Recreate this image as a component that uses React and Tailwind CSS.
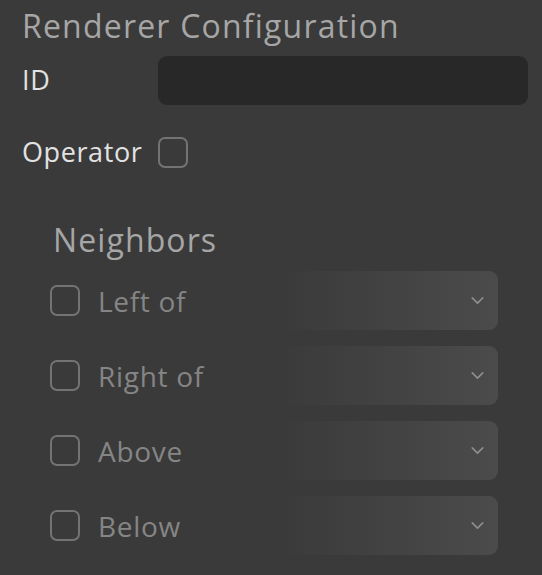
import { FiChevronDown } from "react-icons/fi";

const Box = () => (
  <div className="w-[30px] h-[31px] shrink-0 rounded-[7px] border-2 border-[#737373]" />
);

const NeighborRow = ({ label }) => {
  return (
    <div className="flex items-center h-[59px]">
      <Box />
      <span className="ml-[18px] text-[28px] tracking-[0.7px] text-[#858585] w-[180px]">{label}</span>
      <div className="flex-1 h-full rounded-r-[9px] bg-gradient-to-r from-[#3a3a3a] to-[#4b4b4b] flex items-center justify-end pr-[10px]">
        <FiChevronDown className="text-[#8f8f8f] w-[21px] h-[21px]" strokeWidth={1.8} />
      </div>
    </div>
  );
};

export default function App() {
  const neighbors = ["Left of", "Right of", "Above", "Below"];
  return (
    <div
      className="w-[542px] h-[575px] bg-[#3a3a3a] overflow-hidden"
      style={{ fontFamily: '"Open Sans", "Noto Sans", sans-serif' }}
    >
      <div className="pl-[22px] pr-[14px]">
        <h1 className="text-[32px] tracking-[1.2px] leading-[40px] pt-[6px] text-[#a6a6a6]">Renderer Configuration</h1>
        <div className="flex items-center mt-[10px] h-[49px]">
          <span className="w-[136px] text-[27px] tracking-[0.6px] text-[#e2e2e2]">ID</span>
          <div className="flex-1 h-full rounded-[9px] bg-[#282828]" />
        </div>
        <div className="flex items-center mt-[31px] h-[32px]">
          <span className="w-[136px] text-[27px] tracking-[0.6px] text-[#e2e2e2]">Operator</span>
          <Box />
        </div>
      </div>
      <div className="pl-[50px] w-[498px] mt-[52px]">
        <h2 className="pl-[3px] text-[32px] tracking-[1.1px] leading-[40px] text-[#a6a6a6]">Neighbors</h2>
        <div className="flex flex-col gap-[16px] mt-[11px]">
          {neighbors.map((n, i) => (
            <NeighborRow key={i} label={n} />
          ))}
        </div>
      </div>
    </div>
  );
}
